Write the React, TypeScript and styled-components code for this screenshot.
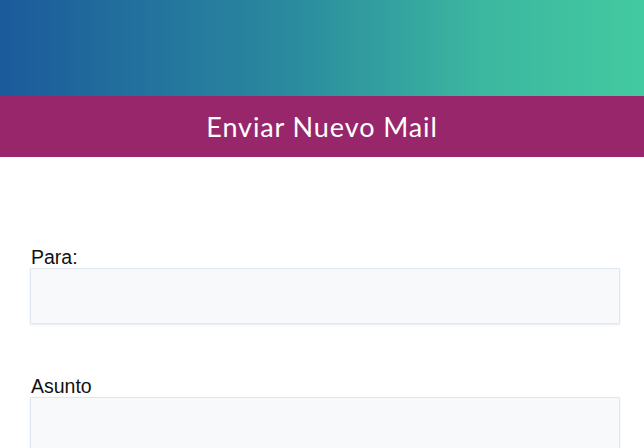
import React from "react";
import styled, { createGlobalStyle } from "styled-components";

const GlobalStyle = createGlobalStyle`
  body {
    margin: 0;
    background: #ffffff;
    font-family: "Liberation Sans", Arial, sans-serif;
    overflow: hidden;
  }
`;

const Page = styled.div`
  width: 100%;
  min-height: 448px;
  display: flex;
  flex-direction: column;
`;

const Banner = styled.div`
  height: 96px;
  background: linear-gradient(90deg, #1b5a9c 0%, #2a8a9e 45%, #3cb7a0 75%, #43caa0 100%);
`;

const TitleBar = styled.div`
  height: 61px;
  background: #98266b;
  display: flex;
  align-items: center;
  justify-content: center;
`;

const Title = styled.h1`
  margin: 0;
  color: #ffffff;
  font-family: Lato, "Open Sans", sans-serif;
  font-weight: 400;
  font-size: 27px;
  letter-spacing: 0.9px;
`;

const Form = styled.form`
  display: flex;
  flex-direction: column;
  padding: 90px 24px 0 30px;
`;

const Field = styled.div<{ gap?: number }>`
  display: flex;
  flex-direction: column;
  margin-bottom: ${({ gap }) => gap ?? 0}px;
`;

const Label = styled.label`
  font-size: 19.5px;
  line-height: 21px;
  color: #111;
  padding-left: 1px;
`;

const Input = styled.input`
  box-sizing: border-box;
  width: 100%;
  height: 56px;
  background: #f7f9fb;
  border: 1px solid #dfe6ef;
  border-radius: 1px;
  box-shadow: 0 1px 2px rgba(150, 170, 190, 0.25);
  outline: none;
  font-size: 16px;
  font-family: "Liberation Sans", Arial, sans-serif;
  padding: 0 12px;
`;

const App = () => {
  return (
    <Page>
      <GlobalStyle />
      <Banner />
      <TitleBar>
        <Title>Enviar Nuevo Mail</Title>
      </TitleBar>
      <Form>
        <Field gap={52}>
          <Label>Para:</Label>
          <Input type="text" />
        </Field>
        <Field>
          <Label>Asunto</Label>
          <Input type="text" />
        </Field>
      </Form>
    </Page>
  );
};

export default App;
